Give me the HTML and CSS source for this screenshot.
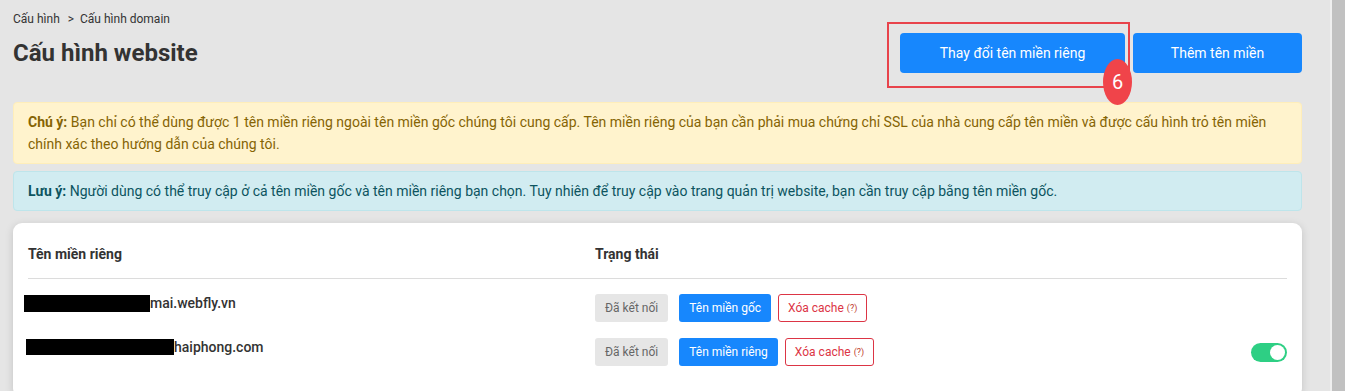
FILE: index.html
```html
<!DOCTYPE html>
<html lang="vi">
<head>
  <meta charset="UTF-8">
  <meta name="viewport" content="width=device-width, initial-scale=1.0">
  <title>Cấu hình website</title>
  <link rel="stylesheet" href="styles.css">
</head>
<body>
  <div class="page">
    <div class="main">
      <div class="breadcrumb">
        <span>Cấu hình</span>
        <span class="sep">&gt;</span>
        <span>Cấu hình domain</span>
      </div>

      <div class="header">
        <h1>Cấu hình website</h1>
        <div class="actions">
          <div class="btn-wrap">
            <button class="btn btn-primary btn-change">Thay đổi tên miền riêng</button>
            <div class="highlight"></div>
            <div class="step-badge">6</div>
          </div>
          <button class="btn btn-primary btn-add">Thêm tên miền</button>
        </div>
      </div>

      <div class="alert alert-warning">
        <b>Chú ý:</b> Bạn chỉ có thể dùng được 1 tên miền riêng ngoài tên miền gốc chúng tôi cung cấp. Tên miền riêng của bạn cần phải mua chứng chỉ SSL của nhà cung cấp tên miền và được cấu hình trỏ tên miền chính xác theo hướng dẫn của chúng tôi.
      </div>
      <div class="alert alert-info">
        <b>Lưu ý:</b> Người dùng có thể truy cập ở cả tên miền gốc và tên miền riêng bạn chọn. Tuy nhiên để truy cập vào trang quản trị website, bạn cần truy cập bằng tên miền gốc.
      </div>

      <div class="card">
        <div class="table-head">
          <div class="col-domain">Tên miền riêng</div>
          <div class="col-status">Trạng thái</div>
        </div>

        <div class="table-row">
          <div class="col-domain domain">
            <span class="redact redact-1"></span>mai.webfly.vn
          </div>
          <div class="col-status status">
            <span class="tag tag-gray">Đã kết nối</span>
            <span class="tag tag-blue">Tên miền gốc</span>
            <span class="tag tag-outline">Xóa cache <small>(?)</small></span>
          </div>
        </div>

        <div class="table-row">
          <div class="col-domain domain">
            <span class="redact redact-2"></span>haiphong.com
          </div>
          <div class="col-status status">
            <span class="tag tag-gray">Đã kết nối</span>
            <span class="tag tag-blue">Tên miền riêng</span>
            <span class="tag tag-outline">Xóa cache <small>(?)</small></span>
            <span class="toggle on"><span class="knob"></span></span>
          </div>
        </div>
      </div>
    </div>
    <div class="scrollbar"></div>
  </div>
</body>
</html>
```

FILE: styles.css
```css
body {
  margin: 0;
  padding: 0;
  font-family: Roboto, "Noto Sans", Arial, sans-serif;
  background-color: #e5e5e5;
  color: #333;
  overflow: hidden;
}

.page {
  display: flex;
  height: 100vh;
}

.main {
  flex: 1;
  padding: 12px 28px 0 13px;
}

.scrollbar {
  width: 13px;
  border-left: 2px solid #efefef;
  background-color: #c1c1c1;
}

.breadcrumb {
  font-size: 12px;
  line-height: 14px;
  color: #333;
}

.breadcrumb .sep {
  margin: 0 3px 0 5px;
}

.header {
  display: flex;
  justify-content: space-between;
  align-items: center;
  margin-top: 7px;
}

h1 {
  margin: 0;
  font-size: 24px;
  font-weight: 700;
  color: #333;
}

.actions {
  display: flex;
  gap: 8px;
}

.btn-wrap {
  position: relative;
}

.btn {
  height: 40px;
  border: none;
  border-radius: 4px;
  font-family: inherit;
  font-size: 14px;
  cursor: pointer;
}

.btn-primary {
  background-color: #1787fd;
  color: #fff;
}

.btn-change {
  width: 225px;
}

.btn-add {
  width: 169px;
}

.highlight {
  position: absolute;
  left: -13px;
  top: -11px;
  width: 239px;
  height: 62px;
  border: 2px solid #e8434b;
  pointer-events: none;
}

.step-badge {
  position: absolute;
  left: 203px;
  top: 26px;
  width: 29px;
  height: 46px;
  border-radius: 50%;
  background-color: #f0444a;
  color: #fff;
  font-size: 20px;
  display: flex;
  align-items: center;
  justify-content: center;
}

.alert {
  border: 1px solid transparent;
  border-radius: 4px;
  padding: 8px 14px;
  font-size: 14px;
  line-height: 22px;
  margin-bottom: 7px;
}

.alert-warning {
  margin-top: 29px;
  background-color: #fff3cd;
  border-color: #ffeeba;
  color: #856404;
}

.alert-info {
  background-color: #d1ecf1;
  border-color: #bee5eb;
  color: #0c5460;
}

.card {
  margin-top: 12px;
  background-color: #fff;
  border-radius: 9px;
  padding: 21px 15px 30px;
  box-shadow: 0 2px 8px rgba(0, 0, 0, 0.15);
}

.table-head,
.table-row {
  display: flex;
}

.table-head {
  font-size: 14px;
  font-weight: 700;
  line-height: 20px;
  padding-bottom: 14px;
  border-bottom: 1px solid #dcdcdc;
}

.table-row {
  padding-top: 15px;
  height: 29px;
}

.col-domain {
  width: 567px;
}

.col-status {
  flex: 1;
}

.domain {
  font-size: 14px;
  font-weight: 500;
  line-height: 20px;
  margin-top: -1px;
}

.redact {
  display: inline-block;
  background-color: #000;
  vertical-align: top;
}

.redact-1 {
  width: 126px;
  height: 17px;
  margin: 2px 0 0 -4px;
}

.redact-2 {
  width: 148px;
  height: 16px;
  margin: 2px 0 0 -2px;
}

.status {
  display: flex;
  align-items: center;
  height: 28px;
}

.tag {
  display: inline-flex;
  align-items: center;
  justify-content: center;
  box-sizing: border-box;
  height: 28px;
  padding: 0 10px;
  border-radius: 3px;
  font-size: 12px;
  white-space: nowrap;
}

.tag-gray {
  background-color: #e6e6e6;
  color: #666;
  min-width: 72px;
  margin-right: 11px;
}

.tag-blue {
  background-color: #1787fd;
  color: #fff;
  margin-right: 7px;
}

.tag-outline {
  border: 1px solid #dc3545;
  color: #dc3545;
  background-color: #fff;
  padding: 0 9px;
}

.tag-outline small {
  font-size: 9px;
  margin-left: 3px;
  color: #c0392b;
}

.toggle {
  margin-left: auto;
  width: 36px;
  height: 19px;
  border-radius: 10px;
  background-color: #2ecf84;
  display: flex;
  align-items: center;
  justify-content: flex-end;
  padding: 0 2px;
  box-sizing: border-box;
}

.toggle .knob {
  width: 15px;
  height: 15px;
  border-radius: 50%;
  background-color: #fff;
}
```
